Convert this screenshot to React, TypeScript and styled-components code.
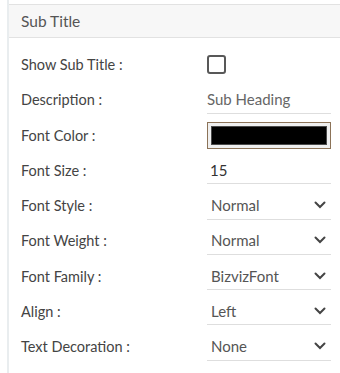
import React, { useState } from "react";
import styled, { createGlobalStyle } from "styled-components";

const GlobalStyle = createGlobalStyle`
  body {
    margin: 0;
    background: #ffffff;
    font-family: Lato, "Open Sans", sans-serif;
  }
`;

const Panel = styled.div`
  margin-left: 7px;
  padding-top: 4px;
  border-left: 2px solid #e9edef;
  min-height: 369px;
`;

const Header = styled.div`
  height: 32px;
  display: flex;
  align-items: center;
  padding-left: 12px;
  background: #f7f7f7;
  border-top: 1px solid #e2e2e2;
  border-bottom: 1px solid #e2e2e2;
  color: #555;
  font-size: 15.5px;
`;

const Body = styled.div`
  padding-top: 9px;
`;

const Row = styled.div`
  display: grid;
  grid-template-columns: 186px 124px;
  align-items: center;
  height: 35.25px;
  padding-left: 12px;
`;

const Label = styled.span`
  color: #444;
  font-size: 14.5px;
`;

const CheckBox = styled.span`
  width: 15px;
  height: 15px;
  border: 2px solid #585858;
  border-radius: 3px;
`;

const TextInput = styled.input<{ $pad?: number; $tone?: string }>`
  box-sizing: border-box;
  width: 124px;
  height: 28px;
  border: none;
  border-bottom: 1px solid #dedede;
  padding: 0 0 0 ${(p) => p.$pad ?? 0}px;
  font-family: inherit;
  font-size: 15px;
  color: ${(p) => p.$tone ?? "#333"};
  outline: none;
  background: transparent;
`;

const ColorBox = styled.div`
  box-sizing: border-box;
  width: 124px;
  height: 27px;
  border: 1px solid #8c7358;
  background: #efefef;
  padding: 3px;
  display: flex;
`;

const Swatch = styled.div<{ $color: string }>`
  flex: 1;
  background: ${(p) => p.$color};
  border: 1px solid #4a4a4a;
`;

const SelectWrap = styled.div`
  box-sizing: border-box;
  width: 124px;
  height: 28px;
  display: flex;
  align-items: center;
  border-bottom: 1px solid #dedede;
  padding-right: 5px;
`;

const Select = styled.select`
  flex: 1;
  appearance: none;
  border: none;
  outline: none;
  background: transparent;
  font-family: inherit;
  font-size: 15px;
  color: #555;
  padding: 0 0 0 4px;
`;

const Chevron = () => (
  <svg width="12" height="8" viewBox="0 0 12 8">
    <path d="M1.5 1.5 L6 6 L10.5 1.5" fill="none" stroke="#444" strokeWidth="2" strokeLinecap="round" />
  </svg>
);

const selects = [
  { label: "Font Style :", value: "Normal", options: ["Normal", "Italic", "Oblique"] },
  { label: "Font Weight :", value: "Normal", options: ["Normal", "Bold", "Lighter"] },
  { label: "Font Family :", value: "BizvizFont", options: ["BizvizFont", "Arial", "Roboto"] },
  { label: "Align :", value: "Left", options: ["Left", "Center", "Right"] },
  { label: "Text Decoration :", value: "None", options: ["None", "Underline", "Overline"] },
];

const App = () => {
  const [desc, setDesc] = useState("Sub Heading");
  const [size, setSize] = useState("15");

  return (
    <>
      <GlobalStyle />
      <Panel>
        <Header>Sub Title</Header>
        <Body>
          <Row>
            <Label>Show Sub Title :</Label>
            <CheckBox />
          </Row>
          <Row>
            <Label>Description :</Label>
            <TextInput value={desc} $tone="#666" onChange={(e) => setDesc(e.target.value)} />
          </Row>
          <Row>
            <Label>Font Color :</Label>
            <ColorBox>
              <Swatch $color="#000000" />
            </ColorBox>
          </Row>
          <Row>
            <Label>Font Size :</Label>
            <TextInput value={size} $pad={3} onChange={(e) => setSize(e.target.value)} />
          </Row>
          {selects.map((s) => (
            <Row key={s.label}>
              <Label>{s.label}</Label>
              <SelectWrap>
                <Select defaultValue={s.value}>
                  {s.options.map((o) => (
                    <option key={o}>{o}</option>
                  ))}
                </Select>
                <Chevron />
              </SelectWrap>
            </Row>
          ))}
        </Body>
      </Panel>
    </>
  );
};

export default App;
